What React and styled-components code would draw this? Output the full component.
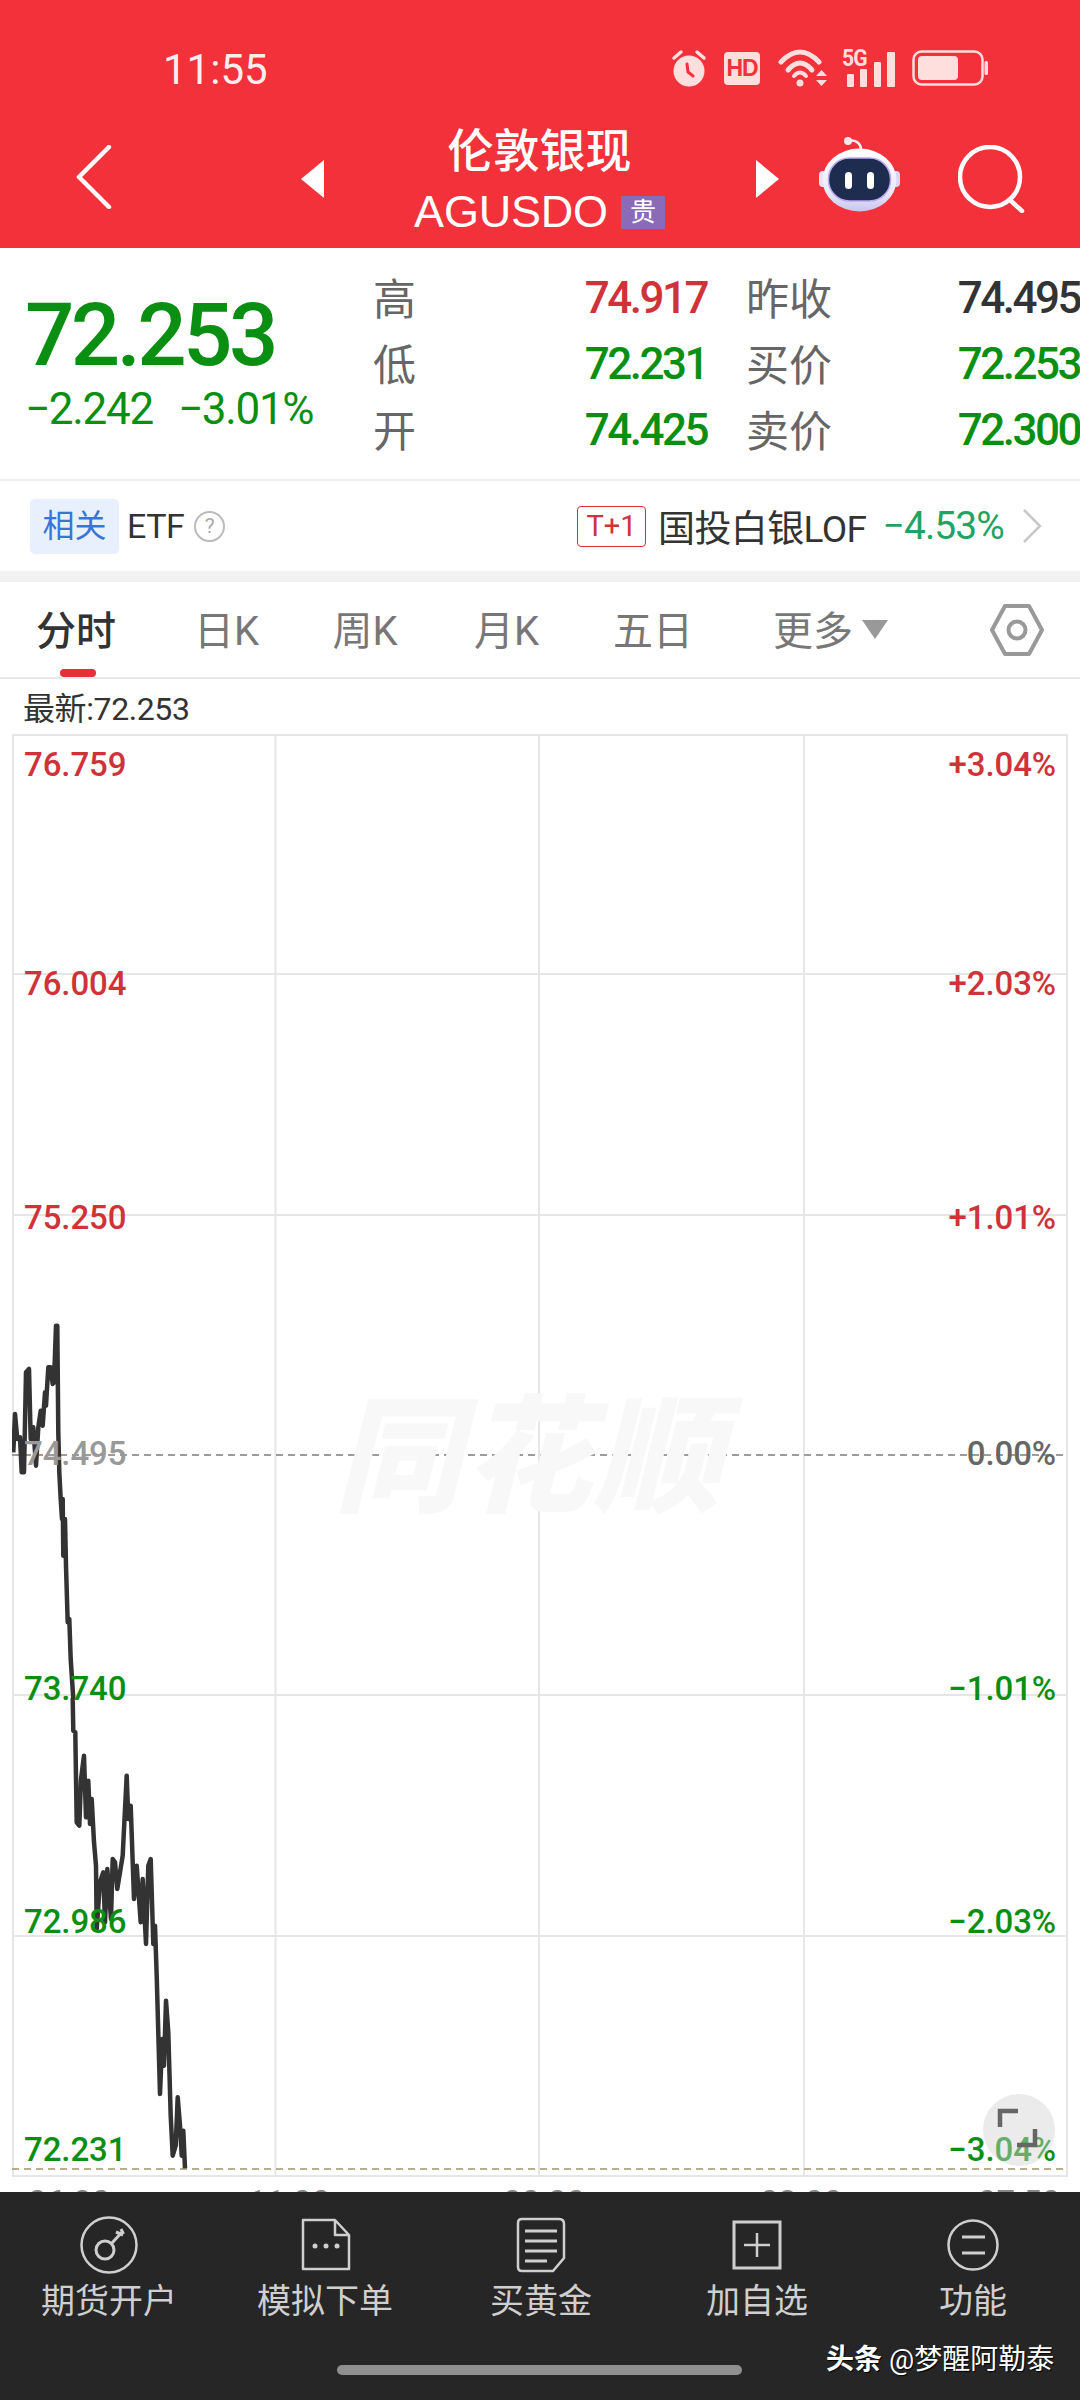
import React from "react";
import styled, { createGlobalStyle } from "styled-components";

const Global = createGlobalStyle`
  html, body { margin: 0; padding: 0; background: #fff; }
  body { font-family: Roboto, "Noto Sans CJK SC", sans-serif; }
  * { box-sizing: border-box; }
`;
const CJK = `Roboto, "Noto Sans CJK SC", sans-serif`;
const GREEN = "#0b8f12";
const RED = "#cf3339";

const Page = styled.div`
  width: 1080px; height: 2400px; overflow: hidden; display: flex; flex-direction: column; background: #fff; font-family: ${CJK};
`;
const Header = styled.header`
  height: 248px; background: #f2313b; color: #fff; flex: none;
`;
const StatusBar = styled.div`
  height: 127px; display: flex; align-items: flex-start; padding: 47px 92px 0 163px;
`;
const Time = styled.div`
  font-size: 42px; line-height: 46px; color: #ffecec; letter-spacing: 0;
`;
const StatusIcons = styled.div`
  margin-left: auto; display: flex; align-items: center; height: 40px; margin-top: 1px; color: #ffdede;
`;
const HdBadge = styled.span`
  width: 36px; height: 33px; margin: 0 18px 0 17px; background: #ffdede; border-radius: 4px; color: #f2313b;
  font: 700 23px/33px "Liberation Sans Narrow", "Liberation Sans", sans-serif; text-align: center; letter-spacing: -1px;
`;
const Signal = styled.span`
  position: relative; width: 54px; height: 38px; margin: 0 16px 0 14px; display: block;
`;
const FiveG = styled.span`
  position: absolute; left: 0; top: -3px; font: 700 24px/24px Roboto, sans-serif; color: #ffdede; letter-spacing: -1px; transform: scaleX(0.88); transform-origin: left;
`;
const NavBar = styled.div`
  display: grid; grid-template-columns: 225px 23px 431px 24px 40px 81px 58px 65px; padding-left: 76px; height: 121px; align-items: start;
`;
const BackIcon = styled.svg` width: 36px; height: 64px; margin-top: 18px; `;
const TriangleIcon = styled.svg` width: 24px; height: 38px; margin-top: 33px; `;
const TitleBlock = styled.div`
  display: flex; flex-direction: column; align-items: center;
`;
const Title = styled.div`
  font-size: 46px; line-height: 50px; margin-top: -1px; font-weight: 500;
`;
const SubRow = styled.div`
  display: flex; align-items: center; gap: 13px; margin-top: 14px; height: 44px;
`;
const Code = styled.span`
  font: 400 45px/44px "Liberation Sans", sans-serif; letter-spacing: -0.2px;
`;
const Tag = styled.span`
  width: 44px; height: 33px; background: #8a6bb8; color: #fff; font-size: 26px; line-height: 33px; text-align: center;
`;
const RobotIcon = styled.svg` grid-column: 6; width: 81px; height: 75px; margin-top: 10px; `;
const SearchIcon = styled.svg` grid-column: 8; width: 68px; height: 68px; margin-top: 18px; `;

const Quote = styled.section`
  height: 233px; display: flex; flex: none; border-bottom: 2px solid #eeeeee;
`;
const PriceCol = styled.div`
  width: 374px; padding: 46px 0 0 25px; flex: none;
`;
const BigPrice = styled.div`
  font-size: 87px; line-height: 82px; font-weight: 500; color: ${GREEN}; letter-spacing: -3.6px;
`;
const Change = styled.div`
  display: flex; gap: 25px; margin-top: 9px; font-size: 44px; line-height: 48px; color: ${GREEN}; letter-spacing: -1.3px;
`;
const StatGrid = styled.div`
  display: grid; grid-template-columns: 333px 333px; column-gap: 40px; grid-auto-rows: 66px; padding-top: 17px; flex: none;
`;
const Stat = styled.div`
  display: flex; justify-content: space-between; align-items: center;
`;
const StatLabel = styled.span` font-size: 43px; color: #666; line-height: 66px; margin: 3px 0 0 -1px; `;
const StatValue = styled.span`
  font-size: 44px; line-height: 66px; letter-spacing: -2.5px; font-weight: 500; color: ${p => p.$c};
`;

const EtfRow = styled.div`
  height: 90px; display: flex; align-items: center; padding: 0 37px 0 30px; flex: none;
`;
const Chip = styled.span`
  width: 89px; height: 55px; background: #e8f0fd; color: #3b74d9; border-radius: 5px; font-size: 32px; line-height: 55px; text-align: center;
`;
const EtfText = styled.span` font-size: 34px; color: #333; margin-left: 8px; letter-spacing: -0.5px; `;
const HelpIcon = styled.span`
  width: 31px; height: 31px; margin-left: 10px; border: 2px solid #bbb; border-radius: 50%; color: #aaa; font-size: 21px; line-height: 27px; text-align: center;
`;
const Fund = styled.div`
  margin-left: auto; display: flex; align-items: center;
`;
const TPlus = styled.span`
  width: 69px; height: 41px; border: 1.5px solid ${RED}; border-radius: 4px; color: ${RED}; font-size: 29px; line-height: 38px; text-align: center; margin-right: 12px;
`;
const FundName = styled.span` font-size: 37px; color: #333; letter-spacing: -0.6px; `;
const FundPct = styled.span` font-size: 39px; color: #1fa463; margin-left: 16px; letter-spacing: -0.9px; `;
const ChevronIcon = styled.svg` width: 22px; height: 36px; margin-left: 17px; `;
const Band = styled.div` height: 11px; background: #f2f2f2; flex: none; `;

const Tabs = styled.nav`
  height: 97px; position: relative; display: flex; align-items: flex-start; padding: 26px 0 0 36px; border-bottom: 2px solid #e8e8e8; flex: none;
`;
const Tab = styled.div`
  width: ${p => p.$w}px; flex: none; font-size: 40px; line-height: 48px; color: ${p => (p.$active ? "#333" : "#777")}; font-weight: ${p => (p.$active ? 500 : 400)}; display: flex; align-items: center;
`;
const Indicator = styled.span`
  position: absolute; left: 60px; bottom: 0; width: 36px; height: 8px; background: #e5303a; border-radius: 4px;
`;
const MoreArrow = styled.span`
  width: 0; height: 0; border-left: 13px solid transparent; border-right: 13px solid transparent; border-top: 19px solid #999; margin: -6px 0 0 9px;
`;
const HexIcon = styled.svg` position: absolute; right: 36px; top: 21px; width: 54px; height: 54px; `;

const Latest = styled.div`
  height: 55px; padding: 12px 0 0 23px; font-size: 32px; line-height: 36px; color: #333; letter-spacing: -0.4px; flex: none;
`;
const Chart = styled.div`
  position: relative; width: 1056px; height: 1444px; margin-left: 12px; flex: none;
`;
const ChartSvg = styled.svg` display: block; width: 1056px; height: 1444px; `;
const Watermark = styled.div`
  position: absolute; left: 322px; top: 650px; font-size: 127px; line-height: 150px; font-weight: 900; font-style: italic; color: #f8f8f8; letter-spacing: 3px; white-space: nowrap;
`;
const AxisLabel = styled.span`
  position: absolute; top: ${p => p.$y - 735 - 20}px; ${p => (p.$right ? "right: 12px;" : "left: 12px;")}
  font-size: 33px; line-height: 40px; font-weight: 500; color: ${p => p.$c}; letter-spacing: -0.1px;
`;
const ExpandButton = styled.div`
  position: absolute; left: 971px; top: 1360px; width: 72px; height: 72px; border-radius: 50%; background: rgba(210,210,210,0.45); display: flex; align-items: center; justify-content: center;
`;
const TimeAxis = styled.div`
  height: 14px; overflow: hidden; display: grid; grid-template-columns: 220px 255px 257px 218px auto; padding: 5px 0 0 28px; flex: none; font-size: 33px; line-height: 40px; color: #888;
`;

const Footer = styled.footer`
  flex: 1; background: #262626; position: relative; padding-top: 23px;
`;
const FootRow = styled.div` display: grid; grid-template-columns: repeat(5, 216px); margin-left: 1px; `;
const FootItem = styled.div` display: flex; flex-direction: column; align-items: center; `;
const FootIcon = styled.svg` width: 60px; height: 60px; display: block; `;
const FootLabel = styled.span` margin-top: 4px; font-size: 34px; line-height: 44px; color: #cfcfcf; `;
const Credit = styled.div`
  position: absolute; left: 826px; top: 150px; display: flex; align-items: center; gap: 7px; color: #fff; text-shadow: 1px 1px 1px #000; white-space: nowrap;
`;
const CreditBrand = styled.span` font-size: 28px; line-height: 36px; font-weight: 700; `;
const CreditName = styled.span` font-size: 28px; line-height: 36px; `;
const HomeBar = styled.div`
  position: absolute; left: 337px; top: 173px; width: 405px; height: 10px; border-radius: 5px; background: #8f8f8f;
`;

const line3 = [[40,460],[45,345],[52,420],[60,415],[65,520],[72,520],[78,220],[87,210],[92,420],[100,385],[108,500],[115,385],[122,335],[128,380],[135,280],[138,320],[145,205],[152,205],[158,255],[162,250],[168,80],[172,80],[175,400],[178,520],[182,600],[186,660],[188,600],[190,770],[195,660],[198,800],[203,970],[208,960],[212,1080],[220,1200]];
const line4 = [[218,0],[220,95],[226,100],[230,370],[238,380],[243,240],[252,170],[258,355],[265,245],[270,375],[275,300],[282,430],[288,500],[290,690],[300,550],[310,520],[315,670],[322,510],[333,660],[338,480],[345,490],[352,570],[368,470],[372,390],[380,230],[385,360],[392,320],[402,600],[410,500],[422,670],[428,540],[438,735],[445,500],[452,480],[460,735],[465,680],[470,830],[480,1185],[487,1020],[492,1100],[498,905],[505,1000],[512,1250],[518,1370],[527,1340],[533,1195],[540,1280],[545,1370],[550,1295],[555,1408]];
const pricePoints = [
  ...line3.map(([x, y]) => [x / 3, y / 3 + 1300]),
  ...line4.map(([x, y]) => [x / 3, y / 3 + 1700]),
].map(p => p.map(n => n.toFixed(1)).join(",")).join(" ");

const HLines = [975, 1216, 1696, 1937];
const VLines = [275.5, 539, 804];
const labels = [
  [766, "76.759", "+3.04%", RED], [985, "76.004", "+2.03%", RED], [1219, "75.250", "+1.01%", RED],
  [1455, "74.495", "0.00%", "#999", "#666"], [1690, "73.740", "−1.01%", GREEN], [1923, "72.986", "−2.03%", GREEN], [2151, "72.231", "−3.04%", GREEN],
];

const Stats = [
  ["高", "74.917", RED, "昨收", "74.495", "#333"],
  ["低", "72.231", GREEN, "买价", "72.253", GREEN],
  ["开", "74.425", GREEN, "卖价", "72.300", GREEN],
];

const Robot = () => (
  <RobotIcon viewBox="0 0 81 75">
    <defs>
      <linearGradient id="rb" x1="0" y1="0" x2="0" y2="1"><stop offset="0" stopColor="#fff" /><stop offset="0.7" stopColor="#e9e8fb" /><stop offset="1" stopColor="#c8c5ee" /></linearGradient>
    </defs>
    <path d="M29 4 C36 2 42 6 42 13" fill="none" stroke="#f4eaf2" strokeWidth="2.5" />
    <circle cx="29" cy="4" r="4" fill="#f6e8ec" />
    <rect x="0" y="34" width="8" height="16" rx="4" fill="#e6e4f8" />
    <rect x="73" y="34" width="8" height="16" rx="4" fill="#d9d6f3" />
    <ellipse cx="40.5" cy="43" rx="37" ry="31.5" fill="url(#rb)" />
    <rect x="9.5" y="21" width="62" height="43" rx="21" fill="#1e2c50" stroke="#b9a9ee" strokeWidth="1.5" />
    <rect x="26" y="35" width="7" height="17" rx="3.5" fill="#fff" />
    <rect x="48" y="35" width="7" height="17" rx="3.5" fill="#fff" />
  </RobotIcon>
);

export default function App() {
  return (
    <Page>
      <Global />
      <Header>
        <StatusBar>
          <Time>11:55</Time>
          <StatusIcons>
            <svg width="36" height="38" viewBox="0 0 36 38">
              <path d="M3 9 L10 3 M33 9 L26 3" stroke="#ffdede" strokeWidth="3.5" strokeLinecap="round" />
              <circle cx="18" cy="22" r="15.5" fill="#ffdede" />
              <path d="M16 15 L17 23 L22 27" stroke="#f2313b" strokeWidth="3" fill="none" strokeLinecap="round" />
            </svg>
            <HdBadge>HD</HdBadge>
            <svg width="50" height="40" viewBox="0 0 50 40">
              <path d="M3 14 Q22 -6 41 14" fill="none" stroke="#ffdede" strokeWidth="5" strokeLinecap="round" />
              <path d="M10 22 Q22 8 34 22" fill="none" stroke="#ffdede" strokeWidth="5" strokeLinecap="round" />
              <path d="M16 28 Q22 21 28 28" fill="none" stroke="#ffdede" strokeWidth="4" strokeLinecap="round" />
              <circle cx="22" cy="35" r="3.5" fill="#ffdede" />
              <path d="M38 28 L49 28 L43.5 22 Z M38 32 L49 32 L43.5 38 Z" fill="#ffdede" />
            </svg>
            <Signal>
              <FiveG>5G</FiveG>
              <svg width="54" height="38" viewBox="0 0 54 38" style={{ display: "block" }}>
                <rect x="5" y="25" width="7" height="13" rx="1" fill="#ffdede" />
                <rect x="18" y="20" width="7" height="18" rx="1" fill="#ffdede" />
                <rect x="32" y="13" width="7" height="25" rx="1" fill="#ffdede" />
                <rect x="45" y="3" width="8" height="35" rx="1" fill="#ffdede" />
              </svg>
            </Signal>
            <svg width="76" height="36" viewBox="0 0 76 36">
              <rect x="1.5" y="1.5" width="69" height="33" rx="8" fill="none" stroke="#ffdede" strokeWidth="2.5" />
              <rect x="6" y="6" width="40" height="24" rx="4" fill="#ffdede" />
              <rect x="72.5" y="11" width="3.5" height="14" rx="1.5" fill="#ffdede" />
            </svg>
          </StatusIcons>
        </StatusBar>
        <NavBar>
          <BackIcon viewBox="0 0 36 64">
            <path d="M33 2 L3 32 L33 62" fill="none" stroke="#fff" strokeWidth="4.5" strokeLinecap="round" strokeLinejoin="round" />
          </BackIcon>
          <TriangleIcon viewBox="0 0 24 38"><path d="M23 0 L0 19 L23 38 Z" fill="#fff" /></TriangleIcon>
          <TitleBlock>
            <Title>伦敦银现</Title>
            <SubRow>
              <Code>AGUSDO</Code>
              <Tag>贵</Tag>
            </SubRow>
          </TitleBlock>
          <TriangleIcon viewBox="0 0 24 38"><path d="M1 0 L24 19 L1 38 Z" fill="#fff" /></TriangleIcon>
          <Robot />
          <SearchIcon viewBox="0 0 68 68">
            <circle cx="32" cy="32" r="30" fill="none" stroke="#fff" strokeWidth="4.5" />
            <path d="M52 55 L64 66" stroke="#fff" strokeWidth="4.5" strokeLinecap="round" />
          </SearchIcon>
        </NavBar>
      </Header>

      <Quote>
        <PriceCol>
          <BigPrice>72.253</BigPrice>
          <Change><span>−2.242</span><span>−3.01%</span></Change>
        </PriceCol>
        <StatGrid>
          {Stats.map(([a, b, c, d, e, f]) => (
            <React.Fragment key={a}>
              <Stat><StatLabel>{a}</StatLabel><StatValue $c={c}>{b}</StatValue></Stat>
              <Stat><StatLabel>{d}</StatLabel><StatValue $c={f}>{e}</StatValue></Stat>
            </React.Fragment>
          ))}
        </StatGrid>
      </Quote>

      <EtfRow>
        <Chip>相关</Chip>
        <EtfText>ETF</EtfText>
        <HelpIcon>?</HelpIcon>
        <Fund>
          <TPlus>T+1</TPlus>
          <FundName>国投白银LOF</FundName>
          <FundPct>−4.53%</FundPct>
          <ChevronIcon viewBox="0 0 22 36"><path d="M3 2 L19 18 L3 34" fill="none" stroke="#c8c8c8" strokeWidth="2.5" /></ChevronIcon>
        </Fund>
      </EtfRow>
      <Band />

      <Tabs>
        <Tab $w={158} $active>分时</Tab>
        <Tab $w={138.5}>日K</Tab>
        <Tab $w={141.5}>周K</Tab>
        <Tab $w={139}>月K</Tab>
        <Tab $w={160}>五日</Tab>
        <Tab $w={120}>更多<MoreArrow /></Tab>
        <Indicator />
        <HexIcon viewBox="0 0 54 54">
          <path d="M15 3 L39 3 L52 27 L39 51 L15 51 L2 27 Z" fill="none" stroke="#999" strokeWidth="4" strokeLinejoin="round" />
          <circle cx="27" cy="27" r="8.5" fill="none" stroke="#999" strokeWidth="4" />
        </HexIcon>
      </Tabs>

      <Latest>最新:72.253</Latest>

      <Chart>
        <Watermark>同花顺</Watermark>
        <ChartSvg viewBox="12 735 1056 1444">
          <rect x="13" y="736" width="1054" height="1441" fill="none" stroke="#e6e6e6" strokeWidth="2" />
          {HLines.map(y => <line key={y} x1="12" x2="1068" y1={y} y2={y} stroke="#e6e6e6" strokeWidth="2" />)}
          {VLines.map(x => <line key={x} x1={x} x2={x} y1="735" y2="2177" stroke="#e6e6e6" strokeWidth="2" />)}
          <line x1="12" x2="1064" y1="1456" y2="1456" stroke="#9c9c9c" strokeWidth="2" strokeDasharray="7 5" />
          <line x1="12" x2="1064" y1="2170" y2="2170" stroke="#b9ae8c" strokeWidth="2" strokeDasharray="7 5" />
          <polyline points={pricePoints} fill="none" stroke="#333" strokeWidth="4.5" strokeLinejoin="round" />
        </ChartSvg>
        {labels.map(([y, l, r, c, rc]) => (
          <React.Fragment key={l}>
            <AxisLabel $y={y} $c={c}>{l}</AxisLabel>
            <AxisLabel $y={y} $c={rc || c} $right>{r}</AxisLabel>
          </React.Fragment>
        ))}
        <ExpandButton>
          <svg width="44" height="44" viewBox="0 0 44 44">
            <path d="M3 19 L3 3 L21 3" fill="none" stroke="#666" strokeWidth="4.5" />
            <path d="M38 21 L38 37 L20 37" fill="none" stroke="#666" strokeWidth="4.5" />
          </svg>
        </ExpandButton>
      </Chart>
      <TimeAxis><span>06:00</span><span>11:00</span><span>00:00</span><span>03:00</span><span>07:50</span></TimeAxis>

      <Footer>
        <FootRow>
          <FootItem>
            <FootIcon viewBox="0 0 60 60" fill="none" stroke="#cfcfcf" strokeWidth="2.5">
              <circle cx="30" cy="30" r="27.5" />
              <circle cx="26" cy="35" r="9" strokeWidth="3" />
              <path d="M33 28 L44 16 M37 17 L44 20 M42 14 L44.5 19" strokeWidth="3" />
            </FootIcon>
            <FootLabel>期货开户</FootLabel>
          </FootItem>
          <FootItem>
            <FootIcon viewBox="0 0 60 60" fill="none" stroke="#cfcfcf" strokeWidth="2.5">
              <path d="M10 5 L40 5 L54 20 L54 54 L8 54 L8 5 Z M40 5 L40 20 L54 20" strokeLinejoin="round" />
              <circle cx="20" cy="31" r="2.5" fill="#cfcfcf" stroke="none" /><circle cx="31" cy="31" r="2.5" fill="#cfcfcf" stroke="none" /><circle cx="42" cy="31" r="2.5" fill="#cfcfcf" stroke="none" />
            </FootIcon>
            <FootLabel>模拟下单</FootLabel>
          </FootItem>
          <FootItem>
            <FootIcon viewBox="0 0 60 60" fill="none" stroke="#cfcfcf" strokeWidth="2.5">
              <path d="M11 4 L48 4 Q53 4 53 9 L53 43 L42 56 L11 56 Q7 56 7 52 L7 8 Q7 4 11 4 Z" />
              <path d="M14 16 L46 16 M14 26 L46 26 M14 36 L46 36 M14 46 L36 46" strokeWidth="3" />
            </FootIcon>
            <FootLabel>买黄金</FootLabel>
          </FootItem>
          <FootItem>
            <FootIcon viewBox="0 0 60 60" fill="none" stroke="#cfcfcf" strokeWidth="3">
              <rect x="7" y="7" width="46" height="46" />
              <path d="M30 18 L30 42 M17 30 L43 30" strokeWidth="2.5" />
            </FootIcon>
            <FootLabel>加自选</FootLabel>
          </FootItem>
          <FootItem>
            <FootIcon viewBox="0 0 60 60" fill="none" stroke="#cfcfcf" strokeWidth="2.5">
              <circle cx="30" cy="30" r="24.5" />
              <path d="M19 22 L42 22 M19 38 L42 38" strokeWidth="3" />
            </FootIcon>
            <FootLabel>功能</FootLabel>
          </FootItem>
        </FootRow>
        <Credit><CreditBrand>头条</CreditBrand><CreditName>@梦醒阿勒泰</CreditName></Credit>
        <HomeBar />
      </Footer>
    </Page>
  );
}
